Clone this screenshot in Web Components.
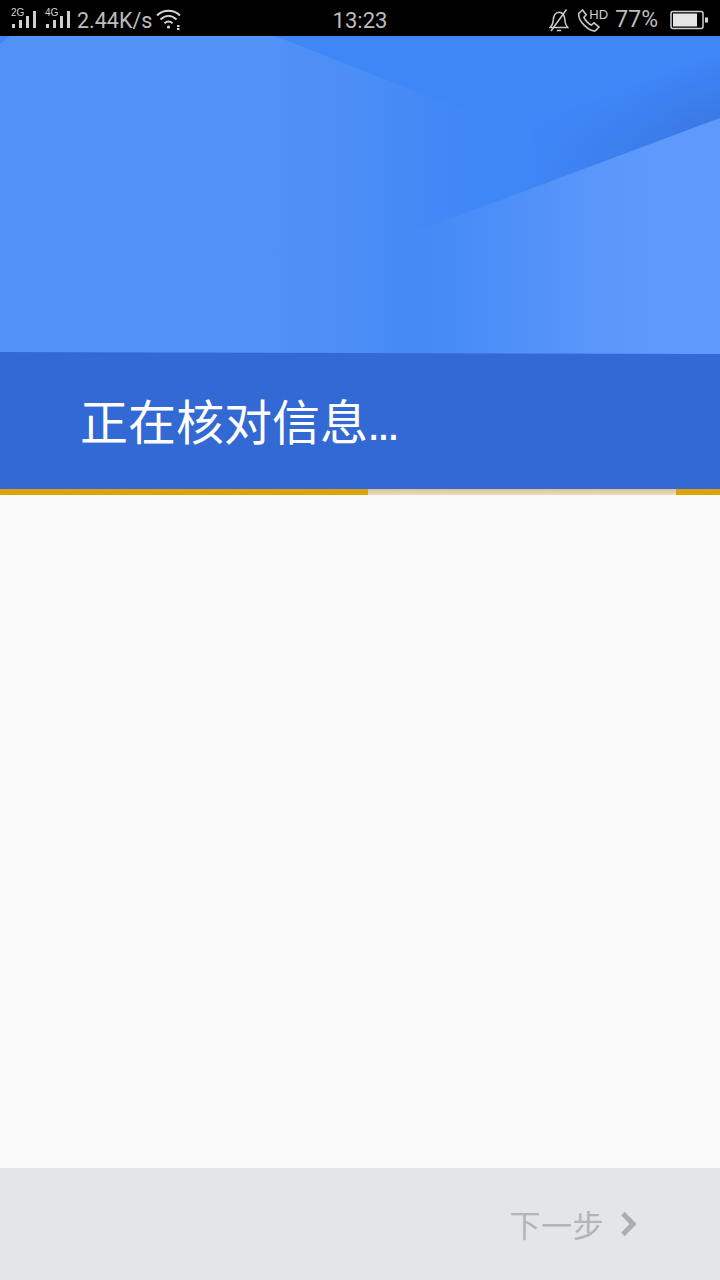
<!DOCTYPE html>
<html lang="zh"><head><meta charset="utf-8"><title>正在核对信息</title>
<style>
html,body{margin:0;padding:0;height:100%}
body{width:720px;height:1280px;overflow:hidden;background:#fafafa;font-family:"Noto Sans","Noto Sans CJK SC",sans-serif}
app-screen{height:1280px}
</style></head><body>
<app-screen>
  <status-bar slot="status"></status-bar>
  <hero-banner slot="hero" title-text="正在核对信息" dots="..."></hero-banner>
  <progress-strip slot="progress"></progress-strip>
  <next-footer slot="footer" label="下一步"></next-footer>
</app-screen>
<script>
class Base extends HTMLElement{
  render(html){this.attachShadow({mode:'open'}).innerHTML=html}
}
customElements.define('app-screen',class extends Base{constructor(){super();this.render(`
<style>
:host{display:flex;flex-direction:column;width:720px}
.main{flex:1;background:#fafafa}
</style>
<slot name="status"></slot><slot name="hero"></slot><slot name="progress"></slot>
<div class="main"></div>
<slot name="footer"></slot>`)}});

customElements.define('status-bar',class extends Base{constructor(){super();this.render(`
<style>
:host{display:grid;grid-template-columns:1fr auto 1fr;align-items:center;height:36px;background:#000;color:#bdbdbd;
font:22px/36px "Roboto","Noto Sans",sans-serif;padding:0 11px 0 10px;box-sizing:border-box}
.l,.r{display:flex;align-items:center}
.l{gap:6px}.r{justify-content:flex-end}
.sig{position:relative;width:28px;height:26px;display:block;margin-top:-2px}
.sig b{position:absolute;left:1px;top:2px;font:400 10px/10px "Liberation Sans",sans-serif;color:#d4d4d4}
.sig svg{position:absolute;left:0;top:0}
.speed{margin-left:-1px;margin-top:2px;font-size:21.5px}
.time{margin-top:3px;margin-left:1px}
.pct{margin:1px 12px 0 8px;font-size:23px}
svg{display:block}
.wifi{margin-left:-2px;margin-top:-2px}
.hd{position:relative;width:30px;height:26px;margin-left:8px;display:block}
.hd b{position:absolute;left:12px;top:1px;font:400 13px/13px "Liberation Sans",sans-serif;color:#d0d0d0}
</style>
<div class="l">
 <span class="sig"><svg width="28" height="26" fill="#cfcfcf"><rect x="2" y="18" width="3" height="4"/><rect x="9" y="14" width="3" height="8"/><rect x="16" y="10" width="3" height="12"/><rect x="23" y="5" width="3" height="17"/></svg><b>2G</b></span>
 <span class="sig"><svg width="28" height="26" fill="#cfcfcf"><rect x="2" y="18" width="3" height="4"/><rect x="9" y="14" width="3" height="8"/><rect x="16" y="10" width="3" height="12"/><rect x="23" y="5" width="3" height="17"/></svg><b>4G</b></span>
 <span class="speed">2.44K/s</span>
 <svg class="wifi" width="26" height="22" viewBox="0 0 26 22" fill="none" stroke="#d6d6d6" stroke-width="2"><path d="M1 7.500C7.500 1.200 17.500 1.200 24 7.500"/><path d="M4.500 11.500C9.500 6.800 15.500 6.800 20.500 11.500"/><path d="M8.500 15.200C11.300 12.800 13.700 12.800 16.500 15.200"/><circle cx="12.500" cy="19" r="1.600" fill="#d6d6d6" stroke="none"/><rect x="21" y="17" width="2.500" height="2" fill="#d6d6d6" stroke="none"/><rect x="21" y="20" width="2.500" height="2" fill="#d6d6d6" stroke="none"/></svg>
</div>
<div class="time">13:23</div>
<div class="r">
 <svg width="20" height="24" viewBox="0 0 20 24" fill="none" stroke="#c8c8c8" stroke-width="1.500"><path d="M1 19.500c2.500-2 3-4 3.200-7C4.500 7 6.500 4.500 10 4.300c3.300.2 5.400 2.600 5.800 7 .2 3.500.8 6 3 8.200z"/><path d="M7.800 22.500h4.400M17.500 1.500 2 23"/></svg>
 <span class="hd"><svg width="26" height="26" viewBox="0 0 26 26" fill="none" stroke="#c8c8c8" stroke-width="1.600"><path d="M5.500 3 1.800 6.300c-.6 3.400 2 8.500 5.600 12.100 3.500 3.400 8 6 11 5.300l3.600-3.600-5-4.300-2.700 2.300c-2.500-1-6.300-5-7.400-7.700l2.300-2.600z"/></svg><b>HD</b></span>
 <span class="pct">77%</span>
 <svg width="39" height="20" viewBox="0 0 39 20"><rect x="1" y="1.500" width="32" height="17" rx="2" fill="none" stroke="#cfcfcf" stroke-width="1.500"/><rect x="3" y="3.500" width="24" height="13" fill="#e4e4e4"/><rect x="35" y="7.500" width="3" height="5" fill="#d8d8d8"/></svg>
</div>`)}});

customElements.define('hero-banner',class extends Base{constructor(){super();
this.render(`
<style>
:host{display:flex;flex-direction:column;width:720px;background:#5a96f8}
.art{height:318px;margin-bottom:-2px;position:relative;overflow:hidden;background:#3f86f7}
.art svg{position:absolute;inset:0}
.band{height:137px;background:#3067d4;position:relative;overflow:hidden;box-sizing:border-box;padding:0 0 0 82px;display:flex;align-items:center;clip-path:polygon(0 0,100% 2px,100% 100%,0 100%)}
.band svg{position:absolute;inset:0}
h1{position:relative;margin:2px 0 0 -2px;font:400 48px/64px "Noto Sans CJK SC","Noto Sans",sans-serif;color:#fff;white-space:nowrap}
h1 span{font:400 48px/64px "Liberation Sans",sans-serif;letter-spacing:-3.500px;margin-left:-1px}
</style>
<div class="art"><svg width="720" height="318" viewBox="0 0 720 318">
<defs>
<linearGradient id="l" gradientUnits="userSpaceOnUse" x1="0" x2="600" y1="0" y2="0"><stop offset="0" stop-color="#5291f6"/><stop offset=".45" stop-color="#5291f6"/><stop offset=".62" stop-color="#4d8ef6" stop-opacity=".85"/><stop offset=".86" stop-color="#3f86f7" stop-opacity="0"/></linearGradient>
<linearGradient id="s" gradientUnits="userSpaceOnUse" x1="598" y1="62" x2="620" y2="120"><stop offset="0" stop-color="#3a78e4" stop-opacity="0"/><stop offset="1" stop-color="#3a78e4" stop-opacity=".9"/></linearGradient>
<linearGradient id="sm" gradientUnits="userSpaceOnUse" x1="530" y1="0" x2="680" y2="0"><stop offset="0" stop-color="#000"/><stop offset="1" stop-color="#fff"/></linearGradient>
<mask id="m"><rect width="720" height="318" fill="url(#sm)"/></mask>
<linearGradient id="b" gradientUnits="userSpaceOnUse" x1="400" y1="0" x2="660" y2="0"><stop offset="0" stop-color="#5f9afa" stop-opacity="0"/><stop offset=".3" stop-color="#5f9afa" stop-opacity=".35"/><stop offset=".75" stop-color="#5f9afa" stop-opacity=".85"/><stop offset="1" stop-color="#5f9afa"/></linearGradient>
</defs>
<polygon points="0,0 275,0 600,128 600,318 0,318" fill="url(#l)"/>
<polygon points="0,0 10,0 0,8" fill="#3f86f7"/>
<polygon points="720,0 720,82 500,165 500,0" fill="url(#s)" mask="url(#m)"/>
<polygon points="720,82 415,196 330,318 720,318" fill="url(#b)"/>
</svg></div>
<div class="band">
<svg width="720" height="137"><filter id="n"><feTurbulence type="fractalNoise" baseFrequency=".8" numOctaves="2" seed="4"/><feColorMatrix values="0 0 0 0 1 0 0 0 0 1 0 0 0 0 1 0 0 0 .1 0"/></filter><rect width="720" height="137" filter="url(#n)" opacity=".35"/></svg>
<h1></h1></div>`);
const h=this.shadowRoot.querySelector('h1');h.textContent=this.getAttribute('title-text');
const d=document.createElement('span');d.textContent=this.getAttribute('dots');h.append(d)}});

customElements.define('progress-strip',class extends Base{constructor(){super();this.render(`
<style>
:host{display:grid;grid-template-columns:368px 1fr 44px;width:720px;height:6px}
.on{background:#dca30c}
.off{background:linear-gradient(#d6c49c,#ecdcb8)}
</style><div class="on"></div><div class="off"></div><div class="on"></div>`)}});

customElements.define('next-footer',class extends Base{constructor(){super();this.render(`
<style>
:host{display:flex;align-items:center;justify-content:flex-end;height:112px;background:#e2e6e9;color:#b0b5b8;padding-right:83px;gap:16px;box-sizing:border-box}
span{font:400 31px/44px "Noto Sans CJK SC",sans-serif;margin-top:-1px;letter-spacing:.5px}
svg{display:block}
</style><span></span><svg width="17" height="26" viewBox="0 0 17 26" fill="none" stroke="#a9aeb1" stroke-width="5"><path d="M3 2.500 13 13 3 23.500"/></svg>`);
this.shadowRoot.querySelector('span').textContent=this.getAttribute('label')}});
</script>
</body></html>
